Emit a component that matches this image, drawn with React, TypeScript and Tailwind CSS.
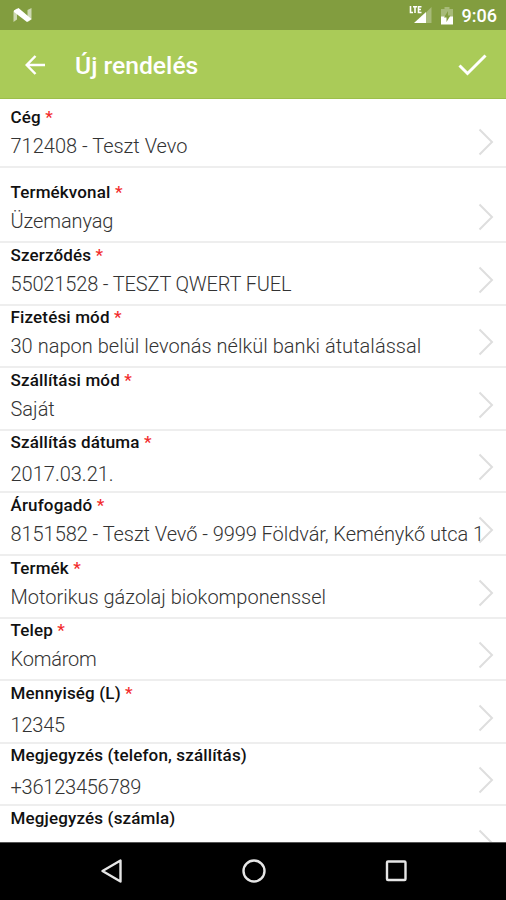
type Field = {
  label: string;
  value: string;
  required?: boolean;
  editable?: boolean;
  height: string;
  tracking?: string;
};

const fields: Field[] = [
  { label: 'Cég', value: '712408 - Teszt Vevo', required: true, height: 'h-[69px]' },
  { label: 'Termékvonal', value: 'Üzemanyag', required: true, height: 'h-[75px]', tracking: 'tracking-[-0.1px]' },
  { label: 'Szerződés', value: '55021528 - TESZT QWERT FUEL', required: true, height: 'h-[62.6px]', tracking: 'tracking-[-0.14px]' },
  { label: 'Fizetési mód', value: '30 napon belül levonás nélkül banki átutalással', required: true, height: 'h-[62.6px]', tracking: 'tracking-[0.03px]' },
  { label: 'Szállítási mód', value: 'Saját', required: true, height: 'h-[62.6px]' },
  { label: 'Szállítás dátuma', value: '2017.03.21.', required: true, editable: true, height: 'h-[62.6px]' },
  { label: 'Árufogadó', value: '8151582 - Teszt Vevő - 9999 Földvár, Keménykő utca 1', required: true, height: 'h-[62.6px]', tracking: 'tracking-[-0.06px]' },
  { label: 'Termék', value: 'Motorikus gázolaj biokomponenssel', required: true, height: 'h-[62.6px]' },
  { label: 'Telep', value: 'Komárom', required: true, height: 'h-[62.6px]', tracking: 'tracking-[-0.2px]' },
  { label: 'Mennyiség (L)', value: '12345', required: true, editable: true, height: 'h-[62.6px]', tracking: 'tracking-[-0.2px]' },
  { label: 'Megjegyzés (telefon, szállítás)', value: '+36123456789', editable: true, height: 'h-[62.6px]', tracking: 'tracking-[-0.23px]' },
  { label: 'Megjegyzés (számla)', value: '', editable: true, height: 'h-[62.6px]' },
];

function StatusBar() {
  return (
    <div className="flex h-[30px] shrink-0 items-center justify-between bg-[#829d3f] pl-[13px] pr-[9px]">
      <svg width="20" height="16" viewBox="0 0 20 16">
        <path d="M0.500 4 4 1.500V12.500L0.500 15z" fill="#fff" opacity=".6" />
        <path d="M14.500 3 18.500 1V12.500l-4 2.500z" fill="#fff" opacity=".6" />
        <path d="M1 3.500 5.500 1 18.500 12 14 15 1 5z" fill="#fff" />
      </svg>
      <div className="flex items-center">
        <svg width="24" height="20" viewBox="0 0 24 20" className="mr-[8px]">
          <path d="M22.500 2v16H17V7.500z" fill="#fff" opacity=".3" />
          <path d="M5 18 17 7v11z" fill="#fff" />
          <path d="M1.500 1v6.500h2.500M4 1.700h4M6 1.700V8M12.500 1.700H9.500v5.800h3M9.500 4.500h2.500" stroke="#fff" strokeWidth="1.600" fill="none" />
        </svg>
        <svg width="12" height="19" viewBox="0 0 12 19" className="mr-[9px]">
          <path d="M0 3h3.500V1h5v2H12v8H0z" fill="#fff" opacity=".3" />
          <path d="M0 10.500h12V18.500H0z" fill="#fff" />
          <path d="M7 5 3 11.500h2.500V16L9.500 9.500H7z" fill="#829d3f" />
        </svg>
        <span className="pt-[2px] text-[18px] font-medium leading-none text-white">9:06</span>
      </div>
    </div>
  );
}

function Toolbar() {
  return (
    <header className="flex h-[69px] shrink-0 items-center border-b border-[#9cbf4b] bg-[#aacb58] pl-[25px] pr-[19px] text-white">
      <svg width="21" height="20" viewBox="0 0 21 20" fill="none" stroke="currentColor" strokeWidth="2.500" className="mt-px">
        <path d="M20 10H2M10.500 1 1.700 10l8.800 9" />
      </svg>
      <h1 className="ml-[29px] flex-1 pt-[5px] text-[24.700px] font-medium leading-none">Új rendelés</h1>
      <svg width="29" height="22" viewBox="0 0 29 22" fill="none" stroke="currentColor" strokeWidth="3" className="mt-px">
        <path d="M1.500 11.500 9.500 19.500 27.500 1.500" />
      </svg>
    </header>
  );
}

function FieldRow({ field }: { field: Field }) {
  return (
    <div className={`relative flex shrink-0 flex-col justify-end border-b-2 border-[#eeeeee] pl-[10.500px] ${field.height}`}>
      <div className="h-[21px] whitespace-nowrap text-[17px] font-medium leading-5 tracking-[0.15px] text-[#111]">
        {field.label}
        {field.required && <span className="text-[#f22c2c]"> *</span>}
      </div>
      <div
        className={`h-[38px] whitespace-nowrap text-[20px] font-light leading-6 text-[#333] ${
          field.editable ? 'pt-[9px]' : 'pt-[6px]'
        } ${field.tracking ?? ''}`}
      >
        {field.value}
      </div>
      <svg
        width="16"
        height="28"
        viewBox="0 0 16 28"
        fill="none"
        stroke="#dedede"
        strokeWidth="2"
        className="absolute bottom-[10px] right-[12px]"
      >
        <path d="M1.500 1.500 14 14 1.500 26.500" />
      </svg>
    </div>
  );
}

function NavigationBar() {
  return (
    <nav className="flex h-[58px] shrink-0 items-center justify-between border-t border-[#555] bg-black pb-px pl-[99px] pr-[99px]">
      <svg width="24" height="24" viewBox="0 0 24 24" fill="none" stroke="#e6e6e6" strokeWidth="2.400" strokeLinejoin="round">
        <path d="M21.500 1.500v21L3.500 12z" />
      </svg>
      <svg width="24" height="24" viewBox="0 0 24 24" fill="none" stroke="#e6e6e6" strokeWidth="2.400">
        <circle cx="12" cy="12" r="10.500" />
      </svg>
      <svg width="22" height="22" viewBox="0 0 22 22" fill="none" stroke="#e6e6e6" strokeWidth="2.400">
        <rect x="2" y="1.500" width="18.500" height="18.500" rx="1" />
      </svg>
    </nav>
  );
}

export default function App() {
  return (
    <div className="flex h-[900px] w-[506px] flex-col overflow-hidden bg-white font-['Roboto',sans-serif]">
      <StatusBar />
      <Toolbar />
      <main className="flex min-h-0 flex-1 flex-col overflow-hidden">
        {fields.map((field) => (
          <FieldRow key={field.label} field={field} />
        ))}
      </main>
      <NavigationBar />
    </div>
  );
}
